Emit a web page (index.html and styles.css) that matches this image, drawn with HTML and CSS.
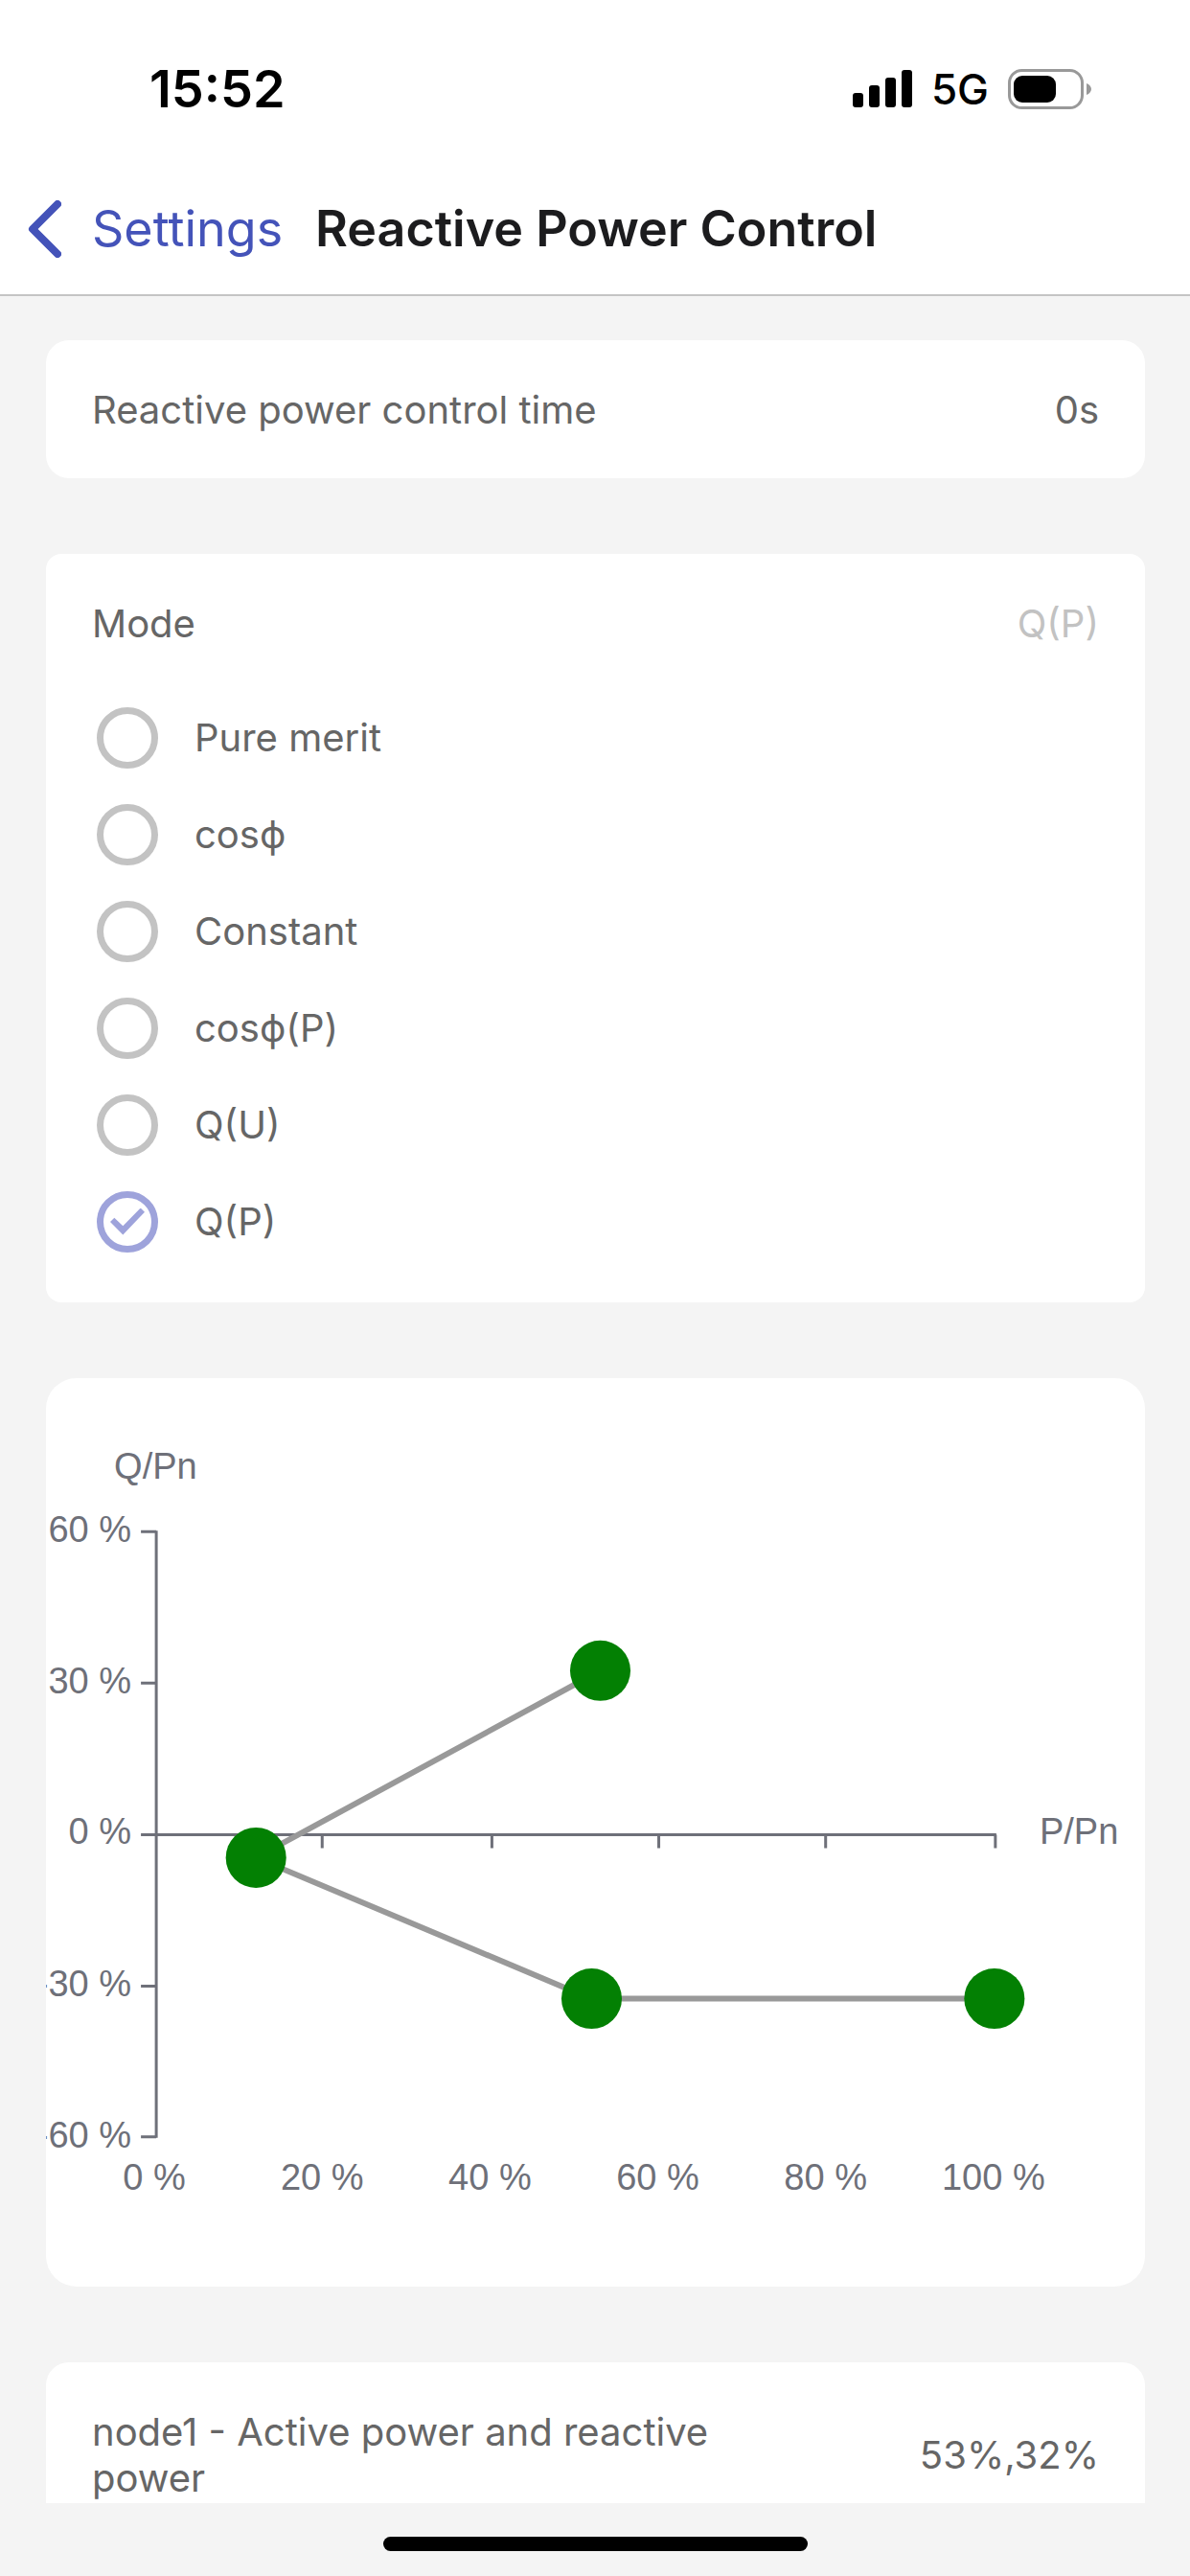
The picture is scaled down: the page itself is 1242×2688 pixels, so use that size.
FILE: index.html
```html
<!DOCTYPE html>
<html lang="en">
<head>
<meta charset="utf-8">
<meta name="viewport" content="width=device-width, initial-scale=1">
<title>Reactive Power Control</title>
<link rel="stylesheet" href="styles.css">
</head>
<body>
<div class="status-bar">
  <time class="status-time">15:52</time>
  <div class="status-icons">
    <svg class="signal" viewBox="0 0 62 39" aria-hidden="true">
      <rect x="0" y="24" width="11" height="15" rx="3"/>
      <rect x="17" y="16" width="11" height="23" rx="3"/>
      <rect x="34" y="8" width="11" height="31" rx="3"/>
      <rect x="51" y="0" width="11" height="39" rx="3"/>
    </svg>
    <span class="network">5G</span>
    <svg class="battery" viewBox="0 0 88 42" aria-hidden="true">
      <rect x="1.5" y="1.5" width="76" height="39" rx="13" fill="none" stroke="#999" stroke-width="3"/>
      <rect x="6" y="7" width="44" height="28" rx="9"/>
      <path d="M82 15c3 1 5 3.500 5 6s-2 5-5 6z" fill="#999"/>
    </svg>
  </div>
</div>

<header class="nav">
  <a class="back" href="#settings">
    <svg class="back-icon" viewBox="0 0 36 60" aria-hidden="true">
      <path d="M32 4 6 30 32 56" fill="none" stroke="currentColor" stroke-width="8" stroke-linecap="round" stroke-linejoin="round"/>
    </svg>
    Settings
  </a>
  <h1 class="title">Reactive Power Control</h1>
</header>

<main class="content">
  <section class="card">
    <div class="row">
      <span class="label">Reactive power control time</span>
      <span class="value">0s</span>
    </div>
  </section>

  <fieldset class="card card-mode" aria-labelledby="mode-label">
    <div class="row">
      <span class="label" id="mode-label">Mode</span>
      <span class="value value-muted">Q(P)</span>
    </div>
    <div class="options">
      <label class="option"><input class="radio" type="radio" name="mode">Pure merit</label>
      <label class="option"><input class="radio" type="radio" name="mode">cosϕ</label>
      <label class="option"><input class="radio" type="radio" name="mode">Constant</label>
      <label class="option"><input class="radio" type="radio" name="mode">cosϕ(P)</label>
      <label class="option"><input class="radio" type="radio" name="mode">Q(U)</label>
      <label class="option"><input class="radio" type="radio" name="mode" checked>Q(P)</label>
    </div>
  </fieldset>

  <section class="card card-chart">
    <svg class="chart" viewBox="0 0 1146 947" role="img" aria-label="Q/Pn against P/Pn">
      <g class="axis">
        <path d="M115 159V792"/>
        <path d="M99 160H115M99 318H115M99 476H115M99 634H115M99 791H115"/>
        <path d="M115 476H991"/>
        <path d="M288 476V490M465 476V490M639 476V490M813 476V490M990 476V490"/>
      </g>
      <g class="axis-text">
        <text x="71" y="105">Q/Pn</text>
        <text x="1036" y="486">P/Pn</text>
      </g>
      <g class="axis-text axis-text-y">
        <text x="89" y="171">60 %</text>
        <text x="89" y="329">30 %</text>
        <text x="89" y="486">0 %</text>
        <text x="89" y="644">-30 %</text>
        <text x="89" y="802">-60 %</text>
      </g>
      <g class="axis-text axis-text-x">
        <text x="113" y="846">0 %</text>
        <text x="288" y="846">20 %</text>
        <text x="463" y="846">40 %</text>
        <text x="638" y="846">60 %</text>
        <text x="813" y="846">80 %</text>
        <text x="988" y="846">100 %</text>
      </g>
      <path class="series" d="M578 305 219 500 568 647H989"/>
      <g class="points">
        <circle cx="578" cy="305" r="31.500"/>
        <circle cx="219" cy="500" r="31.500"/>
        <circle cx="569" cy="647" r="31.500"/>
        <circle cx="989" cy="647" r="31.500"/>
      </g>
    </svg>
  </section>

  <section class="card">
    <div class="row">
      <span class="label">node1 - Active power and reactive power</span>
      <span class="value">53%,32%</span>
    </div>
  </section>
</main>

<footer class="home"><div class="home-bar"></div></footer>
</body>
</html>
```
FILE: styles.css
```css
* {
  box-sizing: border-box;
}

body {
  margin: 0;
  height: 100vh;
  display: flex;
  flex-direction: column;
  background: #f4f4f4;
  color: #666;
  font-family: Inter, "Liberation Sans", sans-serif;
  font-size: 40px;
  line-height: 48px;
}

.status-bar {
  flex: none;
  display: flex;
  align-items: center;
  justify-content: space-between;
  height: 169px;
  padding: 16px 102px 0 156px;
  background: #fff;
  color: #000;
}

.status-time {
  font-size: 54px;
  font-weight: 600;
}

.status-icons {
  display: flex;
  align-items: center;
  gap: 20px;
}

.signal {
  width: 62px;
  height: 39px;
}

.network {
  font-size: 44px;
  font-weight: 500;
}

.battery {
  width: 88px;
  height: 42px;
}

.nav {
  flex: none;
  display: flex;
  align-items: center;
  gap: 34px;
  height: 140px;
  padding: 2px 28px 0;
  background: #fff;
  border-bottom: 2px solid #c4c4c4;
  font-size: 52px;
}

.back {
  display: flex;
  align-items: center;
  gap: 32px;
  color: #4453b9;
  text-decoration: none;
}

.back-icon {
  width: 36px;
  height: 60px;
}

.title {
  margin: 0;
  font-size: 52px;
  font-weight: 600;
  color: #1c1c1e;
  white-space: nowrap;
}

.content {
  flex: 1;
  min-height: 0;
  display: flex;
  flex-direction: column;
  gap: 79px;
  padding: 46px 47px 48px 48px;
  overflow-y: auto;
  scrollbar-width: none;
}

.card {
  flex: none;
  min-width: 0;
  margin: 0;
  padding: 49px 48px 47px;
  border: 0;
  border-radius: 24px;
  background: #fff;
}

.card-mode {
  padding-bottom: 34px;
  border-radius: 16px;
}

.card-chart {
  padding: 0;
  border-radius: 32px;
  overflow: hidden;
}

.row {
  display: flex;
  align-items: center;
  justify-content: space-between;
}

.label {
  max-width: 66%;
}

.value-muted {
  color: #c2c2c2;
}

.options {
  display: grid;
  grid-auto-rows: 101px;
  padding: 44px 5px 0;
}

.option {
  display: flex;
  align-items: center;
  gap: 38px;
}

.radio {
  appearance: none;
  display: grid;
  place-items: center;
  width: 64px;
  height: 64px;
  margin: 0;
  border: 7px solid #c3c3c3;
  border-radius: 50%;
}

.radio:checked {
  border-color: #9ea3db;
}

.radio:checked::before {
  content: "";
  width: 36px;
  height: 28px;
  background: #9ea3db;
  clip-path: polygon(0 52%, 12% 37%, 37% 67%, 88% 0, 100% 15%, 37% 100%);
}

.chart {
  display: block;
  width: 100%;
  height: auto;
}

.axis {
  fill: none;
  stroke: #6e7079;
  stroke-width: 3;
}

.axis-text {
  fill: #6e7079;
  font-family: "Liberation Sans", Arial, sans-serif;
  font-size: 38px;
}

.axis-text-y {
  text-anchor: end;
}

.axis-text-x {
  text-anchor: middle;
}

.series {
  fill: none;
  stroke: #999;
  stroke-width: 6;
}

.points {
  fill: #038003;
}

.home {
  flex: none;
  display: flex;
  justify-content: center;
  height: 76px;
  padding-top: 35px;
}

.home-bar {
  width: 443px;
  height: 15px;
  border-radius: 8px;
  background: #000;
}
```
